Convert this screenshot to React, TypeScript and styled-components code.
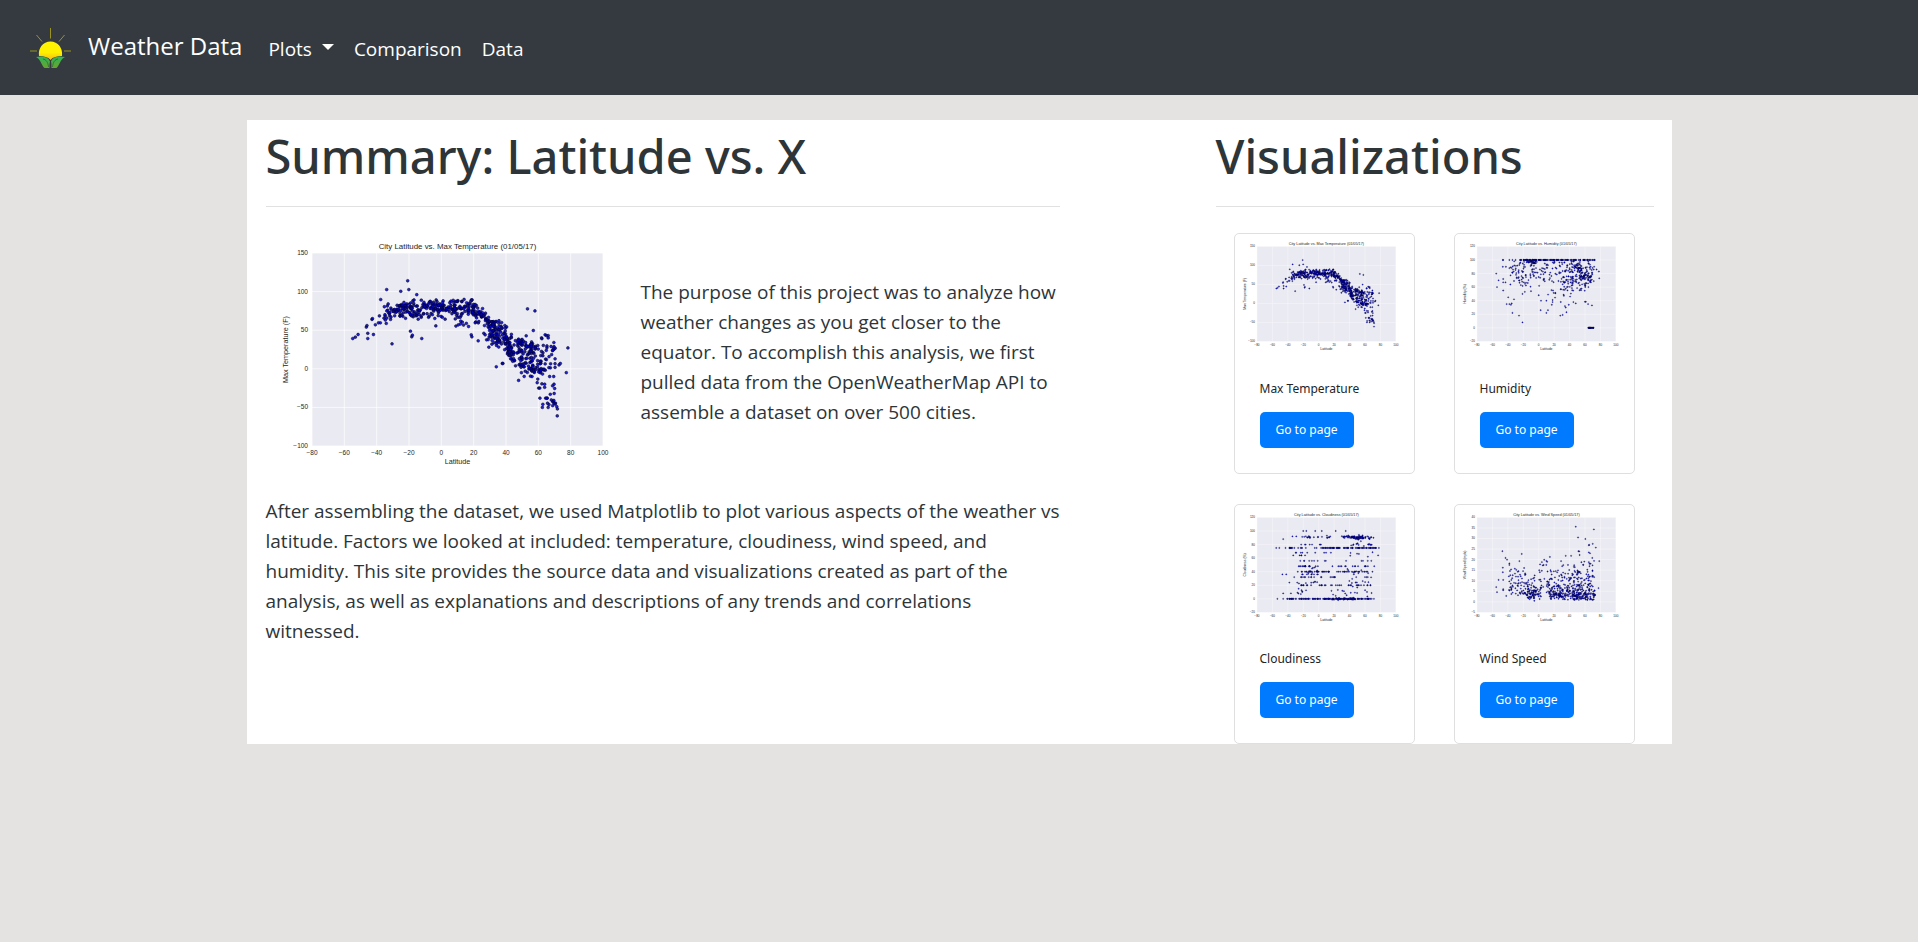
import React from "react";
import styled, { createGlobalStyle } from "styled-components";

const GlobalStyle = createGlobalStyle`
  *, *::before, *::after { box-sizing: border-box; }
  body {
    margin: 0;
    min-height: 100vh;
    background: #e4e3e1;
    color: #2d3539;
    font-family: "Open Sans", "Noto Sans", sans-serif;
    font-size: 19px;
    line-height: 30px;
  }
`;

const Navbar = styled.nav`
  display: flex;
  align-items: center;
  min-height: 95px;
  padding: 0 20px;
  background: #343a40;
`;

const Brand = styled.a`
  display: flex;
  align-items: center;
  gap: 8px;
  margin-right: 18px;
  padding-bottom: 4px;
  color: #fff;
  font-size: 24px;
  text-decoration: none;
`;

const NavList = styled.ul`
  display: flex;
  gap: 20px;
  margin: 0;
  padding: 2px 8px 0;
  list-style: none;
`;

const NavLink = styled.a`
  color: #fff;
  text-decoration: none;
`;

const NavToggle = styled.button`
  display: flex;
  align-items: center;
  gap: 10px;
  padding: 0;
  border: 0;
  background: none;
  color: #fff;
  font: inherit;
`;

const Caret = styled.span`
  margin-bottom: 4px;
  border: 6px solid transparent;
  border-top-color: #fff;
  border-bottom: 0;
`;

const Panel = styled.main`
  display: grid;
  grid-template-columns: repeat(12, 1fr);
  max-width: 1425px;
  margin: 25px auto 0;
  background: #fff;
`;

const Column = styled.section<{ $columns: string }>`
  grid-column: ${(p) => p.$columns};
  padding: 6px 18px 0 19px;
`;

const Heading = styled.h1`
  margin: 0 0 10px;
  font-family: "Noto Sans", sans-serif;
  font-size: 47px;
  font-weight: 500;
  line-height: 60px;
`;

const Rule = styled.hr`
  margin: 20px 0;
  border: 0;
  border-top: 1px solid #e1e1e1;
`;

const Intro = styled.div`
  display: flex;
  align-items: center;
`;

const Figure = styled.div`
  flex: 0 0 375px;
`;

const Text = styled.p`
  margin: 0;
`;

const Details = styled.p`
  margin: 20px 0;
`;

const CardGrid = styled.div`
  display: grid;
  grid-template-columns: 1fr 1fr;
  gap: 30px 39px;
  margin-top: 26px;
  padding: 0 19px 0 18px;
`;

const Card = styled.article`
  border: 1px solid #dfdfdf;
  border-radius: 5px;
  font-family: "Noto Sans", sans-serif;
`;

const CardBody = styled.div`
  padding: 25px;
`;

const CardTitle = styled.h2`
  margin: 0 0 15px;
  color: #212529;
  font-size: 12px;
  font-weight: 400;
  line-height: 16px;
`;

const CardButton = styled.a`
  display: inline-block;
  padding: 8px 16px;
  border-radius: 5px;
  background: #007bff;
  color: #fff;
  font-size: 12px;
  line-height: 20px;
  text-decoration: none;
  vertical-align: top;
`;

const ChartSvg = styled.svg`
  display: block;
  width: 100%;
  height: auto;
  font-family: "Liberation Sans", Arial, sans-serif;
`;

type Point = [number, number];

function makeRandom(seed: number) {
  let s = seed;
  return () => {
    s = (s * 1664525 + 1013904223) % 4294967296;
    return s / 4294967296;
  };
}

type Band = {
  n: number;
  from: number;
  to: number;
  start: number;
  end: number;
  spread: number;
  min?: number;
  max?: number;
};

function scatter(seed: number, bands: Band[], extra: Point[] = []): Point[] {
  const rnd = makeRandom(seed);
  const points: Point[] = [...extra];
  bands.forEach((b) => {
    for (let i = 0; i < b.n; i++) {
      const t = rnd();
      const noise = (rnd() + rnd() + rnd() - 1.5) * 2 * b.spread;
      let y = b.start + (b.end - b.start) * t + noise;
      if (b.min !== undefined && y < b.min) y = b.min + rnd() * b.spread;
      if (b.max !== undefined && y > b.max) y = b.max - rnd() * b.spread;
      points.push([b.from + (b.to - b.from) * t, y]);
    }
  });
  return points;
}

const band = (
  n: number, from: number, to: number, start: number, end: number,
  spread: number, min?: number, max?: number
): Band => ({ n, from, to, start, end, spread, min, max });

const temperature = scatter(
  7,
  [
    band(34, -36, -25, 68, 76, 6, 57, 88),
    band(56, -26, -10, 78, 74, 8, 60, 90),
    band(16, -25, -18, 81, 81, 3),
    band(145, -11, 20, 79, 80, 6, 64, 90),
    band(8, 7, 19, 57, 59, 3),
    band(54, 19, 30, 76, 62, 6),
    band(72, 29, 41, 56, 42, 10, 27, 63),
    band(22, 31, 36, 46, 42, 8),
    band(58, 39, 50, 32, 22, 11, -1, 52),
    band(20, 41, 45, 22, 22, 3),
    band(38, 47, 59, 31, 28, 4),
    band(42, 49, 62, 3, 0, 7, -14, 14),
    band(14, 50, 60, 18, 20, 4),
    band(36, 59, 71, 14, 18, 13, -11, 36),
    band(8, 60, 65, -3, -2, 2),
    band(12, 65, 71, -42, -45, 4),
  ],
  [
    [-20.8, 114], [-33.8, 102.6], [-25.1, 100.4], [-20.1, 102.6], [-15.2, 96],
    [-37.5, 89.7], [-54.8, 39.2], [-53.2, 41], [-51.5, 44.4], [-45.5, 39.2],
    [-45.5, 46], [-42, 44.4], [-46.4, 54], [-46, 56], [-42.9, 64], [-42.6, 65],
    [-40.8, 57], [-38.9, 59.5], [-38.3, 68.5], [-37.7, 59.5], [-30.5, 32.3],
    [-19.1, 48.7], [-18.3, 41.4], [-17.9, 43.5], [-12.1, 39.2], [-3.4, 55.6],
    [18.5, 44], [18.9, 41.4], [22.8, 36.2], [26.3, 46], [27.1, 44], [28, 37.5],
    [29.4, 28], [34, 2.6], [37.7, 6.9], [38.1, 6.9], [47.8, -15], [53.3, 77.6],
    [57.9, 75], [56.9, 49.6], [52.5, 42.7], [62.2, 39], [62, 40], [64.2, 44],
    [65, 43], [66.1, 43], [66.1, 40], [78.3, 27], [77.3, -5], [72.8, 5],
    [73.6, 6.9], [71.7, -61], [71.8, -52], [71.4, -49], [62.5, -50], [62.8, -46],
    [61, -38], [64.5, -38], [65.5, -38], [67.4, -33], [69.8, -32], [68.8, -22],
    [69.7, -20], [70.1, -25.5], [69.5, -10], [67, -10], [63.9, -24], [63.9, -20],
    [62.2, -19.5], [59.3, -18], [60.2, -25], [60.9, -25],
  ]
);

const humidity = scatter(
  21,
  [
    band(55, -24, 10, 100, 100, 0),
    band(26, -15, -2, 97, 97, 2, 92, 100),
    band(75, 8, 74, 100, 100, 0),
    band(42, -37, -20, 82, 78, 14, 60, 99),
    band(62, -20, 12, 84, 80, 14, 60, 98),
    band(70, 12, 45, 84, 74, 19, 42, 98),
    band(26, 26, 46, 58, 60, 11, 38, 75),
    band(110, 40, 72, 82, 77, 13, 54, 98),
    band(34, 49, 56, 87, 84, 5),
    band(28, 55, 70, 75, 76, 3),
    band(20, 63, 73, 0, 0, 0),
  ],
  [
    [-46.5, 100], [-46, 100], [-38, 100], [-34, 100], [-30, 100], [-46.5, 90],
    [-42.5, 90], [-38, 88], [-55, 80], [-52, 70], [-46, 72], [-46, 67], [-43, 67],
    [-54, 60], [-46, 55], [-39.5, 45], [-32, 42], [-41.5, 35], [-38, 35], [-36, 34],
    [-35, 36], [-34, 22], [-25.5, 18], [-21, 8], [-21, 50], [-18, 53], [-10, 54],
    [0, 48], [3, 40], [2.5, 26], [10, 40], [10, 22], [12, 26], [17, 34], [18, 41],
    [18, 38], [28, 18], [31, 19], [36, 23], [34, 32], [35, 30], [39, 34], [45, 38],
    [48, 36], [60, 38.5], [61, 38.5], [64, 35], [69, 33], [78, 83], [78.5, 73],
    [75, 86],
  ]
);

const cloudiness = scatter(
  33,
  [
    band(22, -41, -20, 0, 0, 0),
    band(18, -20, -3, 0, 0, 0),
    band(90, -3, 72, 0, 0, 0),
    band(34, 15, 48, 0, 0, 1),
    band(20, -25, 20, 91, 91, 1),
    band(58, 30, 68, 91, 90, 1),
    band(22, 45, 58, 90, 90, 2),
    band(18, -38, 5, 75, 75, 0),
    band(72, 5, 75, 75, 75, 0),
    band(8, -36, 5, 80, 80, 0),
    band(14, 42, 74, 80, 80, 1),
    band(9, -35, 22, 68, 68, 0),
    band(6, 40, 75, 67, 65, 2),
    band(5, -35, -8, 64, 64, 0),
    band(9, -27, 10, 56, 56, 0),
    band(5, 32, 70, 56, 56, 0),
    band(16, -28, 0, 48, 48, 0),
    band(14, 15, 73, 48, 48, 0),
    band(12, -15, 2, 43, 41, 3),
    band(26, -30, 14, 40, 40, 0),
    band(22, 22, 70, 40, 40, 0),
    band(8, -32, 0, 36, 36, 0),
    band(12, 30, 70, 36, 37, 4),
    band(12, -33, 5, 32, 32, 0),
    band(10, 10, 64, 32, 32, 0),
    band(8, -28, 0, 24, 24, 1),
    band(7, 38, 68, 24, 24, 1),
    band(14, -25, 15, 20, 20, 0),
    band(20, 15, 68, 20, 20, 0),
    band(8, -32, -10, 11, 10, 3),
    band(18, 12, 72, 9, 8, 5),
  ],
  [
    [-20, 100], [-16, 100], [-4.5, 100], [4, 100], [22, 100], [35, 100],
    [-46, 88], [-34, 92], [-29, 92], [71, 90], [-55, 75], [-51, 75], [-43, 75],
    [78, 75], [77, 64], [-47, 36], [-42, 36], [-38, 24], [-53.5, 0], [-46, 0],
    [-46, 8], [-36, 8], [72, 48],
  ]
);

const windSpeed = scatter(
  45,
  [
    band(64, -39, -17, 10, 7, 6, 3, 18),
    band(75, -18, 3, 6, 5, 4, 1, 13),
    band(26, -14, -2, 4, 4, 2),
    band(38, 0, 20, 11, 9, 6, 3, 20),
    band(110, 13, 45, 4, 4, 2.4, 1, 12),
    band(60, 20, 46, 9, 10, 5, 3, 18),
    band(95, 45, 73, 4, 3, 2.6, 0.5, 12),
    band(85, 45, 72, 10, 9, 6, 3, 20),
    band(40, 25, 73, 3, 3, 0.8),
  ],
  [
    [-47, 24], [-22, 22.7], [-43, 20.8], [-41, 20], [-38, 18.2], [-38, 17.5],
    [-25, 19.3], [-46.5, 16.2], [-46.5, 14], [-52, 10.4], [-46, 10.4], [-55, 7],
    [-54, 4.6], [-46, 6], [-46, 5.5], [-42, 2.8], [10, 19.4], [11, 19], [14.5, 21.3],
    [35, 21.8], [42, 21.8], [29, 19.3], [48, 35.6], [71.5, 34.3], [51, 30.5],
    [60.5, 29.8], [65, 26.8], [65.5, 27], [70, 27.5], [74, 25.7], [51.5, 24],
    [52.5, 23.9], [53, 22.2], [65, 23.4], [66.5, 23], [69.5, 20.8], [78.5, 19.3],
    [77.5, 6.5],
  ]
);

type ChartProps = {
  name: string;
  yLabel: string;
  points: Point[];
  yTicks: number[];
  plotHeight?: number;
};

function Chart({ name, yLabel, points, yTicks, plotHeight = 199 }: ChartProps) {
  const left = 46;
  const top = 26;
  const width = 291;
  const yMin = yTicks[0];
  const yMax = yTicks[yTicks.length - 1];
  const px = (lat: number) => left + ((lat + 80) / 180) * width;
  const py = (v: number) => top + ((yMax - v) / (yMax - yMin)) * plotHeight;
  const xTicks = [-80, -60, -40, -20, 0, 20, 40, 60, 80, 100];
  const bottom = top + plotHeight;
  const label = (v: number) => String(v).replace("-", "−");

  return (
    <ChartSvg viewBox={`0 0 375 ${plotHeight + 56}`} role="img" aria-label={`${name} by latitude`}>
      <rect x={left} y={top} width={width} height={plotHeight} fill="#eaeaf2" />
      <g stroke="#fff" strokeWidth="0.7">
        {xTicks.map((t) => <line key={t} x1={px(t)} x2={px(t)} y1={top} y2={bottom} />)}
        {yTicks.map((t) => <line key={t} x1={left} x2={left + width} y1={py(t)} y2={py(t)} />)}
      </g>
      <g fill="#0000d0" fillOpacity="0.85" stroke="#00001c" strokeOpacity="0.75" strokeWidth="0.7">
        {points.map(([lat, v], i) => <circle key={i} cx={px(lat)} cy={py(v)} r="1.4" />)}
      </g>
      <g fill="#262626" fontSize="6.5">
        {xTicks.map((t) => (
          <text key={t} x={px(t)} y={bottom + 9} textAnchor="middle">{label(t)}</text>
        ))}
        {yTicks.map((t) => (
          <text key={t} x={left - 4} y={py(t) + 2} textAnchor="end">{label(t)}</text>
        ))}
      </g>
      <g fill="#262626" textAnchor="middle">
        <text x={left + width / 2} y={top - 4} fontSize="7.9">
          {`City Latitude vs. ${name} (01/05/17)`}
        </text>
        <text x={left + width / 2} y={bottom + 18} fontSize="7.2">Latitude</text>
        <text transform={`translate(22 ${top + plotHeight / 2}) rotate(-90)`} fontSize="7.2">{yLabel}</text>
      </g>
    </ChartSvg>
  );
}

const charts: ChartProps[] = [
  { name: "Max Temperature", yLabel: "Max Temperature (F)", points: temperature, yTicks: [-100, -50, 0, 50, 100, 150] },
  { name: "Humidity", yLabel: "Humidity (%)", points: humidity, yTicks: [-20, 0, 20, 40, 60, 80, 100, 120] },
  { name: "Cloudiness", yLabel: "Cloudiness (%)", points: cloudiness, yTicks: [-20, 0, 20, 40, 60, 80, 100, 120] },
  { name: "Wind Speed", yLabel: "Wind Speed (mph)", points: windSpeed, yTicks: [-5, 0, 5, 10, 15, 20, 25, 30, 35, 40] },
];

function Logo() {
  return (
    <svg width="60" height="60" viewBox="0 0 60 60" aria-hidden="true">
      <defs>
        <linearGradient id="sun" x1="0" y1="0" x2="0" y2="1">
          <stop offset="0" stopColor="#fff500" />
          <stop offset="0.6" stopColor="#fff000" />
          <stop offset="1" stopColor="#fdb813" />
        </linearGradient>
        <linearGradient id="leaf" x1="0" y1="0" x2="0" y2="1">
          <stop offset="0" stopColor="#2fb45a" />
          <stop offset="1" stopColor="#6aa32d" />
        </linearGradient>
      </defs>
      <path
        d="M30.500 12V22.500M16.500 19L22 25.500M44.500 19L39 25.500M10 35H17M44 35H51"
        stroke="#a89c1c"
        strokeWidth="0.9"
      />
      <path d="M19 40C18 32 23 25.500 30.500 25.500C38 25.500 43 32 42 40C37 40 33 41 30.500 44C28 41 24 40 19 40Z" fill="url(#sun)" />
      <path d="M16 41C23 39.500 28.500 41 30 45.500C29.500 47 29.500 49 29.500 52H24.500C21 49 21 43.500 16 41Z" fill="url(#leaf)" />
      <path d="M45 41C38 39.500 32.500 41 31 45.500C31.500 47 31.500 49 31.500 52H36.500C40 49 40 43.500 45 41Z" fill="url(#leaf)" />
      <path
        d="M23 43C26 43.500 28 46 28.500 51M38 43C35 43.500 33 46 32.500 51"
        fill="none"
        stroke="#2b5a3c"
        strokeWidth="0.700"
      />
    </svg>
  );
}

export default function App() {
  return (
    <>
      <GlobalStyle />
      <Navbar>
        <Brand href="#home">
          <Logo />
          Weather Data
        </Brand>
        <NavList>
          <li><NavToggle type="button" aria-haspopup="true">Plots <Caret /></NavToggle></li>
          <li><NavLink href="#comparison">Comparison</NavLink></li>
          <li><NavLink href="#data">Data</NavLink></li>
        </NavList>
      </Navbar>
      <Panel>
        <Column $columns="1 / span 7">
          <Heading>Summary: Latitude vs. X</Heading>
          <Rule />
          <Intro>
            <Figure><Chart {...charts[0]} plotHeight={193} /></Figure>
            <Text>
              The purpose of this project was to analyze how weather changes as you get closer to the
              equator. To accomplish this analysis, we first pulled data from the OpenWeatherMap API to
              assemble a dataset on over 500 cities.
            </Text>
          </Intro>
          <Details>
            After assembling the dataset, we used Matplotlib to plot various aspects of the weather vs
            latitude. Factors we looked at included: temperature, cloudiness, wind speed, and
            humidity. This site provides the source data and visualizations created as part of the
            analysis, as well as explanations and descriptions of any trends and correlations
            witnessed.
          </Details>
        </Column>
        <Column $columns="9 / span 4">
          <Heading>Visualizations</Heading>
          <Rule />
          <CardGrid>
            {charts.map((chart) => (
              <Card key={chart.name}>
                <Chart {...chart} />
                <CardBody>
                  <CardTitle>{chart.name}</CardTitle>
                  <CardButton href="#plot">Go to page</CardButton>
                </CardBody>
              </Card>
            ))}
          </CardGrid>
        </Column>
      </Panel>
    </>
  );
}
